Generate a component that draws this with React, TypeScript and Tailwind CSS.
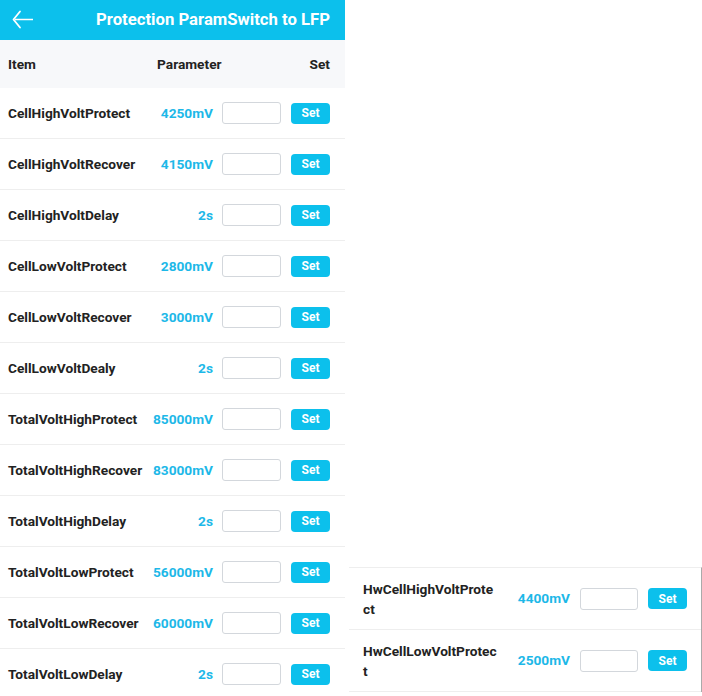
import React from "react";

const rows: [string, string][] = [
  ["CellHighVoltProtect", "4250mV"],
  ["CellHighVoltRecover", "4150mV"],
  ["CellHighVoltDelay", "2s"],
  ["CellLowVoltProtect", "2800mV"],
  ["CellLowVoltRecover", "3000mV"],
  ["CellLowVoltDealy", "2s"],
  ["TotalVoltHighProtect", "85000mV"],
  ["TotalVoltHighRecover", "83000mV"],
  ["TotalVoltHighDelay", "2s"],
  ["TotalVoltLowProtect", "56000mV"],
  ["TotalVoltLowRecover", "60000mV"],
  ["TotalVoltLowDelay", "2s"],
];

const hwRows: [string, string][] = [
  ["HwCellHighVoltProtect", "4400mV"],
  ["HwCellLowVoltProtect", "2500mV"],
];

function Row({ name, value }: { name: string; value: string }) {
  return (
    <div className="shrink-0 flex items-center h-[51px] border-b border-[#eeeeee] pl-2 pr-[15px]">
      <div className="flex-1 text-[13.7px] font-bold text-[#222]">{name}</div>
      <div className="text-[13.7px] font-bold text-[#1db8e8] text-right">{value}</div>
      <div className="ml-[9px] w-[59px] h-[22px] rounded-[3px] border border-[#d3d7dc] bg-white" />
      <div className="ml-[10px] w-[39px] h-[21px] rounded-[4px] bg-[#0cc0ec] text-white text-[12px] font-bold flex items-center justify-center">
        Set
      </div>
    </div>
  );
}

function HwRow({ name, value }: { name: string; value: string }) {
  return (
    <div className="flex items-center h-[62px] border-b border-[#eeeeee] pl-[14px] pr-[14px]">
      <div className="w-[134px] text-[13.7px] leading-[20px] font-bold text-[#222] break-all">{name}</div>
      <div className="flex-1 text-[13.7px] font-bold text-[#1db8e8] text-right">{value}</div>
      <div className="ml-[10px] w-[58px] h-[22px] rounded-[3px] border border-[#d3d7dc] bg-white" />
      <div className="ml-[10px] w-[39px] h-[21px] rounded-[4px] bg-[#0cc0ec] text-white text-[12px] font-bold flex items-center justify-center">
        Set
      </div>
    </div>
  );
}

export default function App() {
  return (
    <div
      className="flex w-[702px] h-[696px] overflow-hidden bg-white"
      style={{ fontFamily: "Roboto, 'Liberation Sans', sans-serif" }}
    >
      <div className="w-[345px] shrink-0 flex flex-col">
        <div className="shrink-0 h-[40px] bg-[#0cc0ec] flex items-center pl-[12px] pr-[15px]">
          <svg width="22" height="20" viewBox="0 0 22 20" className="shrink-0">
            <polyline points="8,1.5 1.5,9.5 8,17.5" fill="none" stroke="white" strokeWidth="1.8" strokeLinecap="round" strokeLinejoin="round" />
            <line x1="3" y1="9.5" x2="21" y2="9.5" stroke="white" strokeWidth="1.5" />
          </svg>
          <div className="flex-1 text-right text-white text-[16.7px] font-bold">Protection ParamSwitch to LFP</div>
        </div>
        <div className="shrink-0 h-[48px] bg-[#f7f8fa] flex items-center pl-2 pr-[15px] text-[13.7px] font-bold text-[#222]">
          <div className="flex-1">Item</div>
          <div className="mr-[88px]">Parameter</div>
          <div>Set</div>
        </div>
        {rows.map(([n, v]) => (
          <Row key={n} name={n} value={v} />
        ))}
      </div>
      <div className="flex-1 flex flex-col justify-end pb-[4px] pl-[4px]">
        <div className="border-t border-[#eeeeee] border-r border-r-[#aaaaaa]">
          {hwRows.map(([n, v]) => (
            <HwRow key={n} name={n} value={v} />
          ))}
        </div>
      </div>
    </div>
  );
}
